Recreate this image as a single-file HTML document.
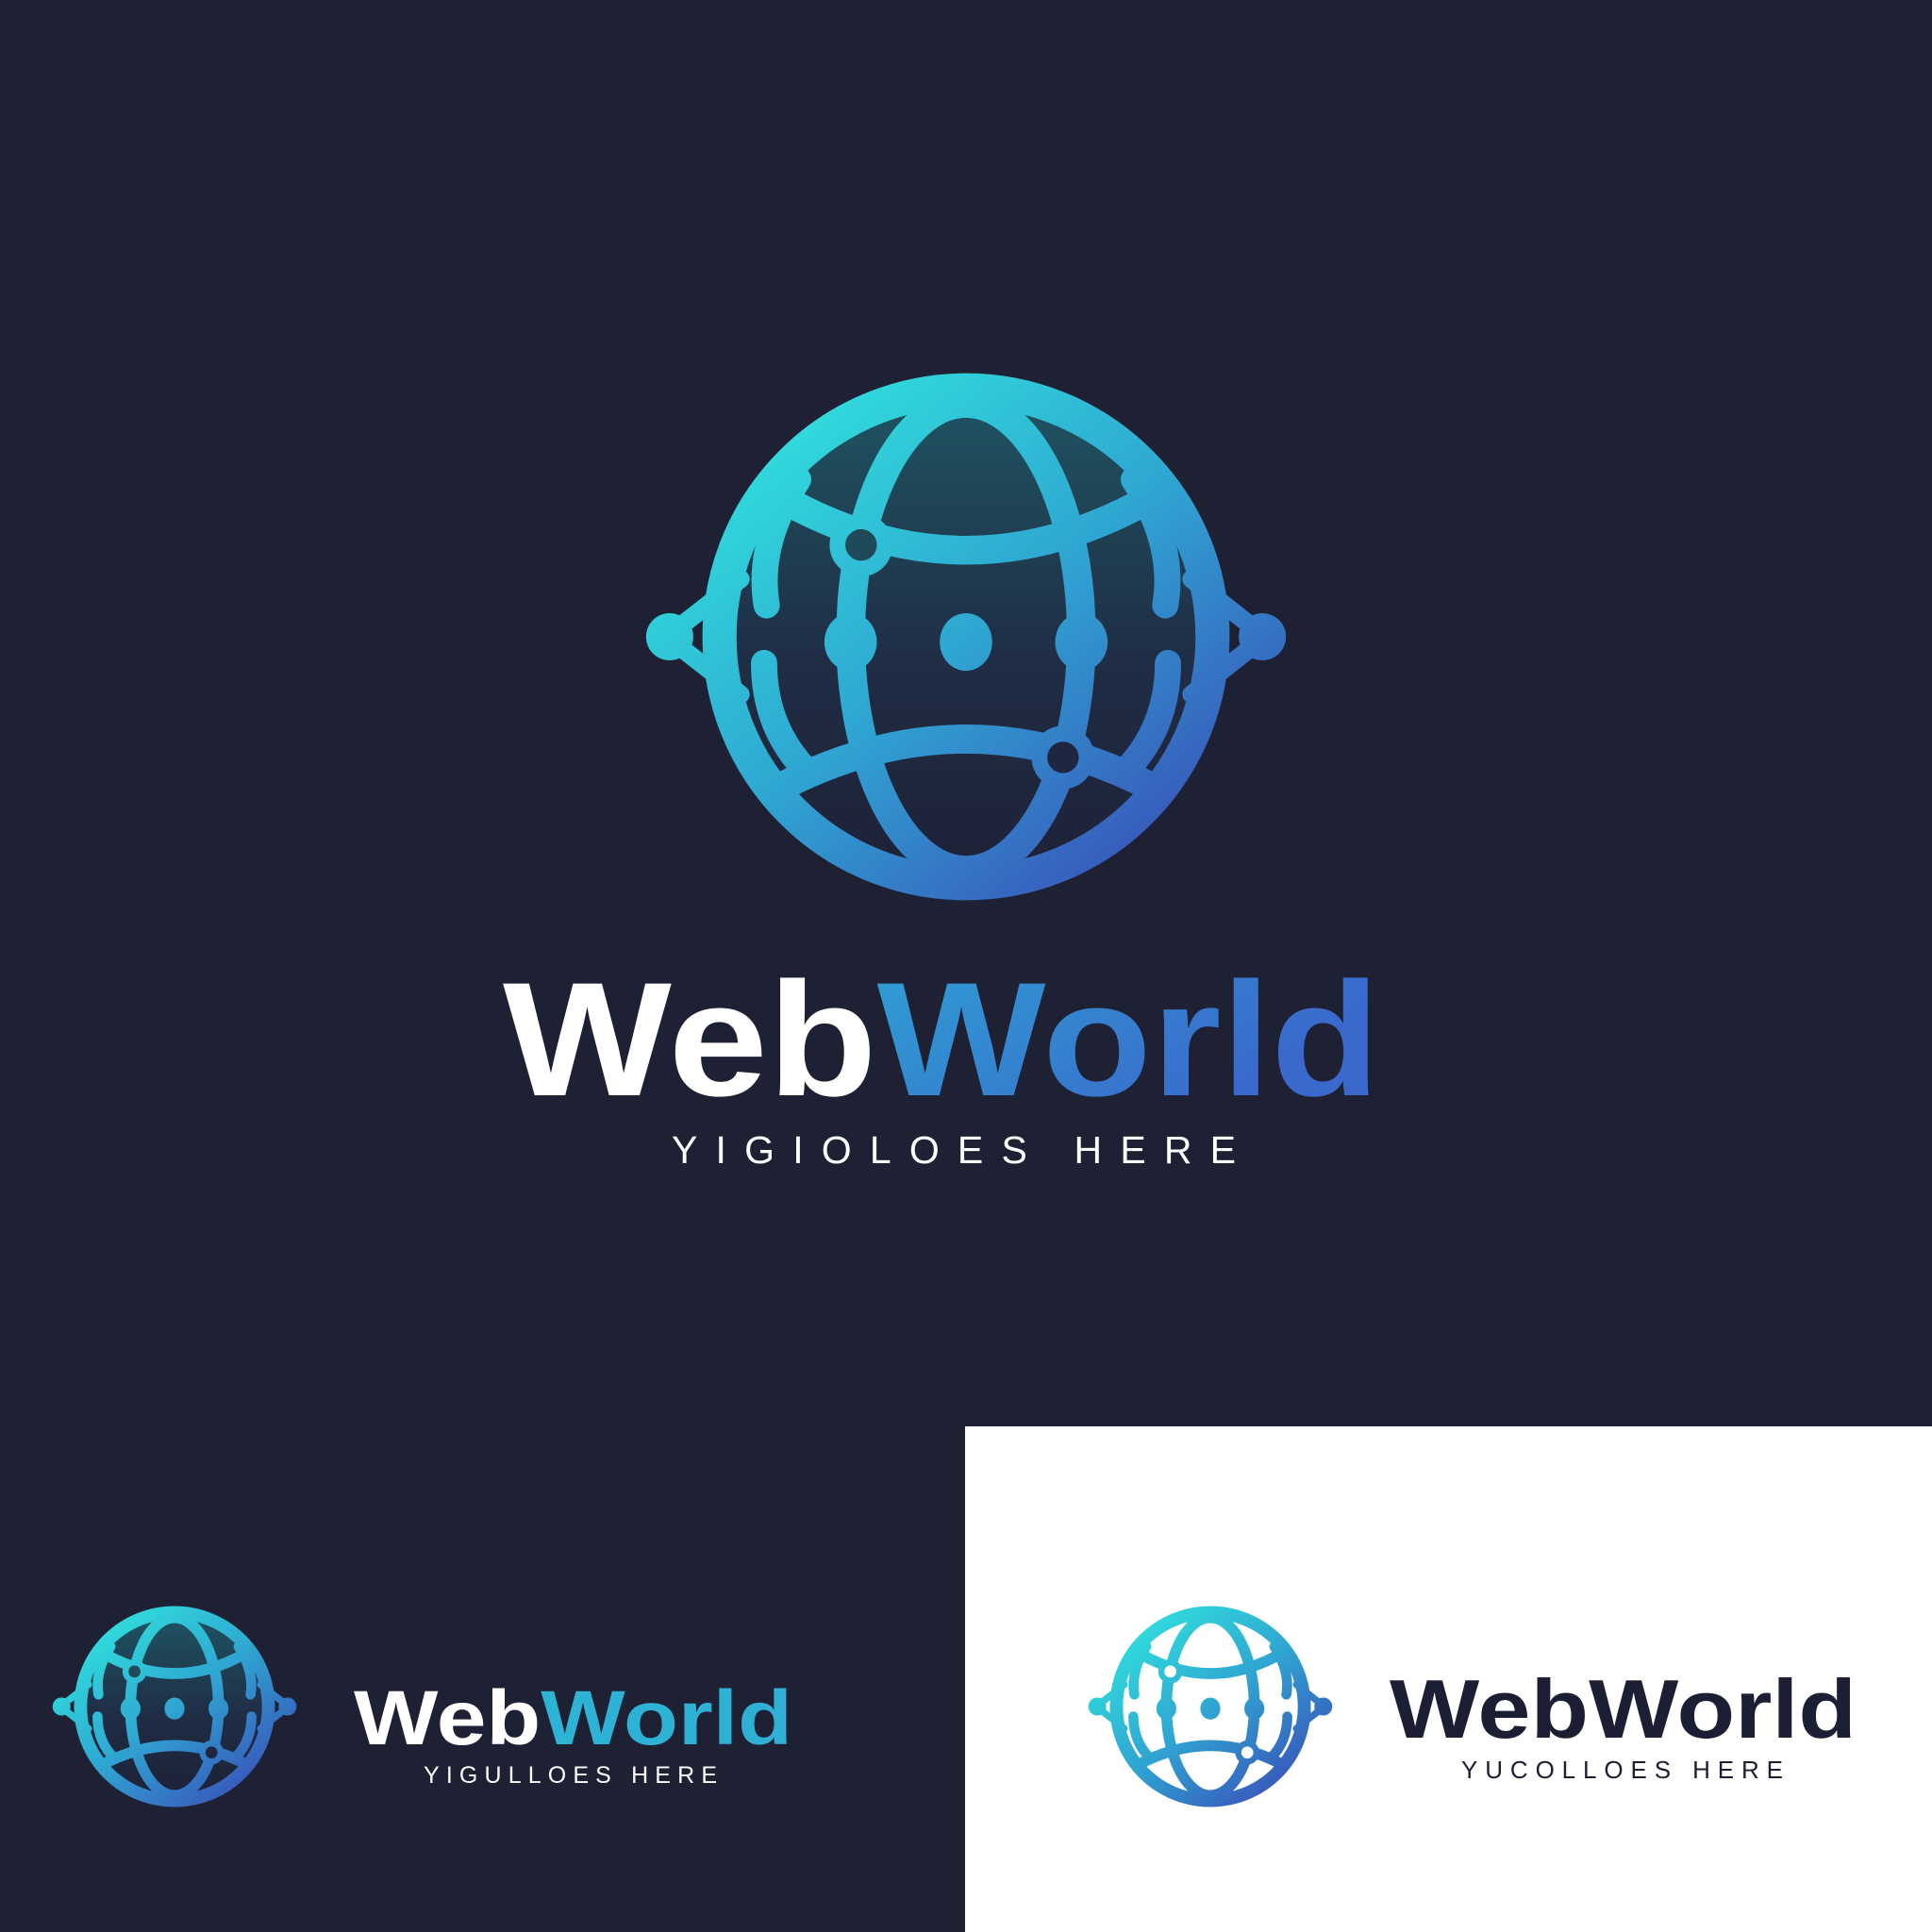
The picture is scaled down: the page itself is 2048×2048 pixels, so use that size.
<!DOCTYPE html>
<html><head><meta charset="utf-8"><style>
html,body{margin:0;padding:0;background:#1e2033;}
svg{display:block}
</style></head><body>
<svg width="2048" height="2048" viewBox="0 0 2048 2048" xmlns="http://www.w3.org/2000/svg">
<defs>
<linearGradient id="gs" gradientUnits="userSpaceOnUse" x1="-80" y1="-100" x2="80" y2="100">
<stop offset="0" stop-color="#30e6de"/><stop offset="0.5" stop-color="#2fa6d2"/><stop offset="1" stop-color="#3a4ab8"/>
</linearGradient>
<linearGradient id="gi" gradientUnits="userSpaceOnUse" x1="0" y1="-94" x2="0" y2="94">
<stop offset="0" stop-color="#1f5563"/><stop offset="0.55" stop-color="#1f2d45"/><stop offset="1" stop-color="#1e2136"/>
</linearGradient>
<linearGradient id="gt" x1="0" y1="0" x2="1" y2="0.3">
<stop offset="0" stop-color="#27c4d8"/><stop offset="1" stop-color="#3a68cc"/>
</linearGradient>
<linearGradient id="gt2" x1="0" y1="0" x2="1" y2="0">
<stop offset="0" stop-color="#2ab6d6"/><stop offset="1" stop-color="#2fb0d4"/>
</linearGradient>
<g id="globe" fill="none" stroke="url(#gs)" stroke-linecap="round">
<circle r="94" stroke-width="13"/>
<ellipse rx="44" ry="89" stroke-width="11"/>
<path d="M-74,-55 Q0,-11 74,-55" stroke-width="11"/>
<path d="M-72,58 Q0,20 72,58" stroke-width="11"/>
<path d="M-64,-60 Q-80,-35 -76,-12 M-77,10 Q-77,35 -60,52" stroke-width="10"/>
<path d="M64,-60 Q80,-35 76,-12 M77,10 Q77,35 60,52" stroke-width="10"/>
<path d="M-114,0 L-86,-22 M-114,0 L-86,22 M114,0 L86,-22 M114,0 L86,22" stroke-width="7"/>
<g fill="url(#gs)" stroke="none">
<circle cx="-113" cy="0" r="9"/><circle cx="113" cy="0" r="9"/>
<ellipse cx="-44" cy="2" rx="10" ry="11"/><ellipse cx="44" cy="2" rx="10" ry="11"/>
<ellipse cx="0" cy="2" rx="10" ry="11"/>
</g>
</g>
<g id="rings" fill="none" stroke="url(#gs)" stroke-width="6">
<circle cx="-40" cy="-35" r="9"/><circle cx="37" cy="46" r="9"/>
</g>
</defs>
<rect width="2048" height="2048" fill="#1e2033"/>
<rect x="1023" y="1512" width="1025" height="536" fill="#ffffff"/>

<g transform="translate(1024,675) scale(2.78)">
<circle r="90" fill="url(#gi)"/>
<use href="#globe"/>
<circle cx="-40" cy="-35" r="9" fill="#1f4a5a"/><circle cx="37" cy="46" r="9" fill="#1f2740"/><use href="#rings"/>
</g>
<text x="533" y="1161" font-family="Liberation Sans, sans-serif" font-weight="bold" font-size="172" textLength="930" lengthAdjust="spacingAndGlyphs"><tspan fill="#ffffff">Web</tspan><tspan fill="url(#gt)">World</tspan></text>
<text x="712" y="1233" font-family="Liberation Sans, sans-serif" font-size="41" fill="#ffffff" textLength="598" lengthAdjust="spacing">YIGIOLOES HERE</text>

<g transform="translate(185,1809) scale(1.06)">
<circle r="90" fill="url(#gi)"/>
<use href="#globe"/>
<circle cx="-40" cy="-35" r="9" fill="#1f4a5a"/><circle cx="37" cy="46" r="9" fill="#1f2740"/><use href="#rings"/>
</g>
<text x="375" y="1849" font-family="Liberation Sans, sans-serif" font-weight="bold" font-size="82" textLength="465" lengthAdjust="spacingAndGlyphs"><tspan fill="#ffffff">Web</tspan><tspan fill="url(#gt2)">World</tspan></text>
<text x="449" y="1890" font-family="Liberation Sans, sans-serif" font-size="25" fill="#ffffff" textLength="311" lengthAdjust="spacing">YIGULLOES HERE</text>

<g transform="translate(1283,1809) scale(1.06)">
<circle r="90" fill="#ffffff"/>
<use href="#globe"/>
<circle cx="-40" cy="-35" r="9" fill="#ffffff"/><circle cx="37" cy="46" r="9" fill="#ffffff"/><use href="#rings"/>
</g>
<text x="1473" y="1842" font-family="Liberation Sans, sans-serif" font-weight="bold" font-size="88" fill="#1c1f33" textLength="495" lengthAdjust="spacingAndGlyphs">WebWorld</text>
<text x="1549" y="1885" font-family="Liberation Sans, sans-serif" font-size="26" fill="#1c1f33" textLength="341" lengthAdjust="spacing">YUCOLLOES HERE</text>
</svg>
</body></html>
